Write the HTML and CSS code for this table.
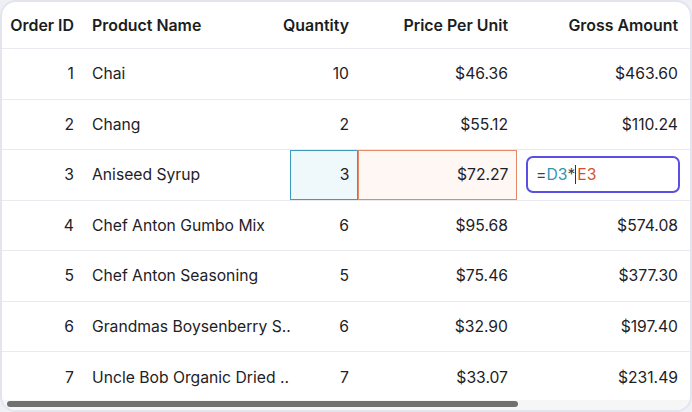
FILE: index.html
```html
<!DOCTYPE html>
<html>
<head>
<meta charset="utf-8">
<link rel="stylesheet" href="styles.css">
</head>
<body>
<div class="grid-frame">
  <div class="row header">
    <div class="cell c1 r">Order ID</div>
    <div class="cell c2">Product Name</div>
    <div class="cell c3 r">Quantity</div>
    <div class="cell c4 r">Price Per Unit</div>
    <div class="cell c5 r">Gross Amount</div>
  </div>
  <div class="row">
    <div class="cell c1 r">1</div>
    <div class="cell c2">Chai</div>
    <div class="cell c3 r">10</div>
    <div class="cell c4 r">$46.36</div>
    <div class="cell c5 r">$463.60</div>
  </div>
  <div class="row">
    <div class="cell c1 r">2</div>
    <div class="cell c2">Chang</div>
    <div class="cell c3 r">2</div>
    <div class="cell c4 r">$55.12</div>
    <div class="cell c5 r">$110.24</div>
  </div>
  <div class="row">
    <div class="cell c1 r">3</div>
    <div class="cell c2">Aniseed Syrup</div>
    <div class="cell c3 r ref-a">3</div>
    <div class="cell c4 r ref-b">$72.27</div>
    <div class="cell c5 edit-cell">
      <div class="editor"><span class="op">=</span><span class="ra">D3</span><span class="op">*</span><span class="caret"></span><span class="rb">E3</span></div>
    </div>
  </div>
  <div class="row">
    <div class="cell c1 r">4</div>
    <div class="cell c2">Chef Anton Gumbo Mix</div>
    <div class="cell c3 r">6</div>
    <div class="cell c4 r">$95.68</div>
    <div class="cell c5 r">$574.08</div>
  </div>
  <div class="row">
    <div class="cell c1 r">5</div>
    <div class="cell c2">Chef Anton Seasoning</div>
    <div class="cell c3 r">5</div>
    <div class="cell c4 r">$75.46</div>
    <div class="cell c5 r">$377.30</div>
  </div>
  <div class="row">
    <div class="cell c1 r">6</div>
    <div class="cell c2">Grandmas Boysenberry S..</div>
    <div class="cell c3 r">6</div>
    <div class="cell c4 r">$32.90</div>
    <div class="cell c5 r">$197.40</div>
  </div>
  <div class="row last">
    <div class="cell c1 r">7</div>
    <div class="cell c2">Uncle Bob Organic Dried ..</div>
    <div class="cell c3 r">7</div>
    <div class="cell c4 r">$33.07</div>
    <div class="cell c5 r">$231.49</div>
  </div>
  <div class="hscroll"><div class="thumb"></div></div>
</div>
</body>
</html>
```

FILE: styles.css
```css
* { box-sizing: border-box; }
html, body {
  margin: 0;
  padding: 0;
  background: #eef0f6;
}
body {
  width: 692px;
  height: 412px;
  font-family: Inter, "Noto Sans", sans-serif;
  font-size: 15.7px;
  color: #1d2127;
}
.grid-frame {
  position: relative;
  width: 692px;
  height: 412px;
  background: #ffffff;
  border: 2px solid #e2e4ef;
  border-radius: 16px;
  overflow: hidden;
}
.row {
  display: grid;
  grid-template-columns: 81px 207px 68px 159px 170px;
  height: 50.5px;
  border-bottom: 1px solid #e9eaf0;
}
.row.header {
  height: 47px;
  font-weight: 600;
  font-size: 15.9px;
  color: #1a1d22;
}
.row.header .cell { overflow: visible; }
.row.last { border-bottom: none; }
.cell {
  display: flex;
  align-items: center;
  padding: 0 9px;
  white-space: nowrap;
  overflow: hidden;
}
.cell.r { justify-content: flex-end; }
.c2 {
  padding-right: 0;
  overflow: visible;
}
.ref-a {
  background: #eff8fb;
  border: 1.5px solid #3b9dbb;
  padding-right: 7.5px;
}
.ref-b {
  background: #fff7f4;
  border: 1.5px solid #e48a66;
  padding-right: 7.5px;
}
.edit-cell {
  padding: 0 0 0 9px;
  overflow: visible;
}
.editor {
  flex: none;
  width: 154px;
  height: 37px;
  border: 2px solid #5a4fe4;
  border-radius: 7px;
  display: flex;
  align-items: center;
  padding-left: 8px;
  background: #fff;
}
.op { color: #3b3f46; }
.ra { color: #2e95b5; }
.rb { color: #d5502a; }
.caret {
  display: inline-block;
  width: 1px;
  height: 19px;
  background: #333;
  margin: 0 1px 0 0;
}
.hscroll {
  position: absolute;
  left: 0;
  right: 0;
  bottom: 0;
  height: 10px;
  background: #f6f6f7;
  padding: 1px 0 0 5px;
}
.thumb {
  width: 511px;
  height: 6px;
  background: #707070;
  border-radius: 3px;
}
```
